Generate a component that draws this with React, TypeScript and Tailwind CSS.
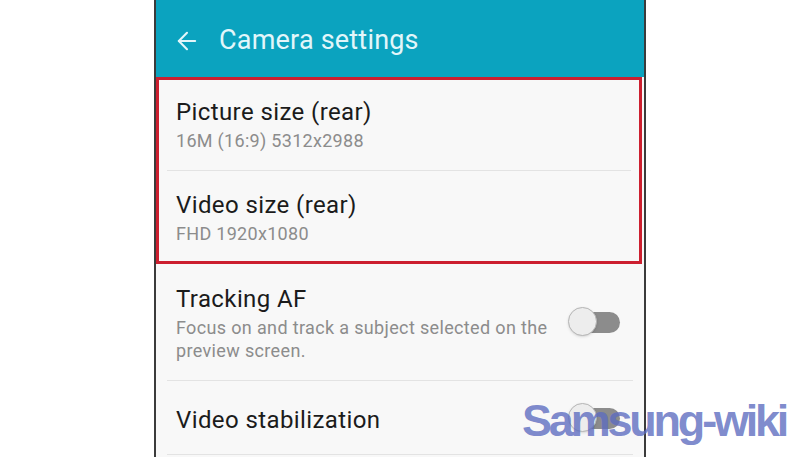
import { ArrowLeft } from 'lucide-react';

const Toggle = () => (
  <div className="relative w-[52px] h-[30px] shrink-0">
    <div className="absolute left-[12px] top-[5px] w-[40px] h-[21px] rounded-full bg-[#8c8c8c]" />
    <div className="absolute left-0 top-0 w-[29px] h-[29px] rounded-full bg-[#ededed] border border-[#b5b5b5] shadow-sm" />
  </div>
);

const Divider = () => <div className="mx-[11px] h-px bg-[#e3e3e3]" />;

export default function App() {
  return (
    <div
      className="relative w-[800px] h-[457px] bg-white overflow-hidden"
      style={{ fontFamily: 'Roboto, "Liberation Sans", sans-serif' }}
    >
      <div className="ml-[154px] w-[492px] h-full border-x-2 border-[#3b3b3b] bg-[#f8f8f8] flex flex-col">
        <div className="h-[77px] bg-[#0ba3bf] flex items-center pl-[17px] pt-[4px] gap-[18px] text-[#e2f6fa]">
          <ArrowLeft size={28} strokeWidth={1.8} />
          <span className="text-[27px] leading-none tracking-[0.2px]">Camera settings</span>
        </div>

        <div className="mr-[2px] border-[3px] border-[#cc1f2f] h-[187px] flex flex-col">
          <div className="h-[90px] flex flex-col justify-center pl-[17px]">
            <div className="text-[24px] leading-[28px] tracking-[0.4px] text-[#1b1b1b]">Picture size (rear)</div>
            <div className="text-[18px] leading-[22px] tracking-[0.3px] text-[#8c8c8c] mt-[4px]">16M (16:9) 5312x2988</div>
          </div>
          <div className="mx-[8px] h-px bg-[#e3e3e3]" />
          <div className="flex-1 flex flex-col justify-center pl-[17px] pt-[4px]">
            <div className="text-[24px] leading-[28px] tracking-[0.4px] text-[#1b1b1b]">Video size (rear)</div>
            <div className="text-[18px] leading-[22px] tracking-[0.3px] text-[#8c8c8c] mt-[4px]">FHD 1920x1080</div>
          </div>
        </div>

        <div className="h-[116px] flex items-center pl-[20px] pr-[24px] justify-between">
          <div className="w-[385px] pt-[3px]">
            <div className="text-[24px] leading-[28px] tracking-[0.4px] text-[#1b1b1b]">Tracking AF</div>
            <div className="text-[18px] leading-[23px] tracking-[0.35px] text-[#8c8c8c] mt-[3px]">
              Focus on and track a subject selected on the preview screen.
            </div>
          </div>
          <Toggle />
        </div>
        <Divider />

        <div className="h-[73px] flex items-center pl-[20px] pr-[24px] justify-between">
          <div className="text-[24px] leading-[28px] tracking-[0.4px] text-[#1b1b1b] pt-[4px]">Video stabilization</div>
          <Toggle />
        </div>
        <Divider />
      </div>

      <div
        className="absolute left-[522px] top-[393px] text-[45px] leading-[56px] font-bold tracking-[-3.2px] text-[#5d6cc0]/80"
        style={{ fontFamily: '"Liberation Sans", Arial, sans-serif' }}
      >
        Samsung-wiki
      </div>
    </div>
  );
}
